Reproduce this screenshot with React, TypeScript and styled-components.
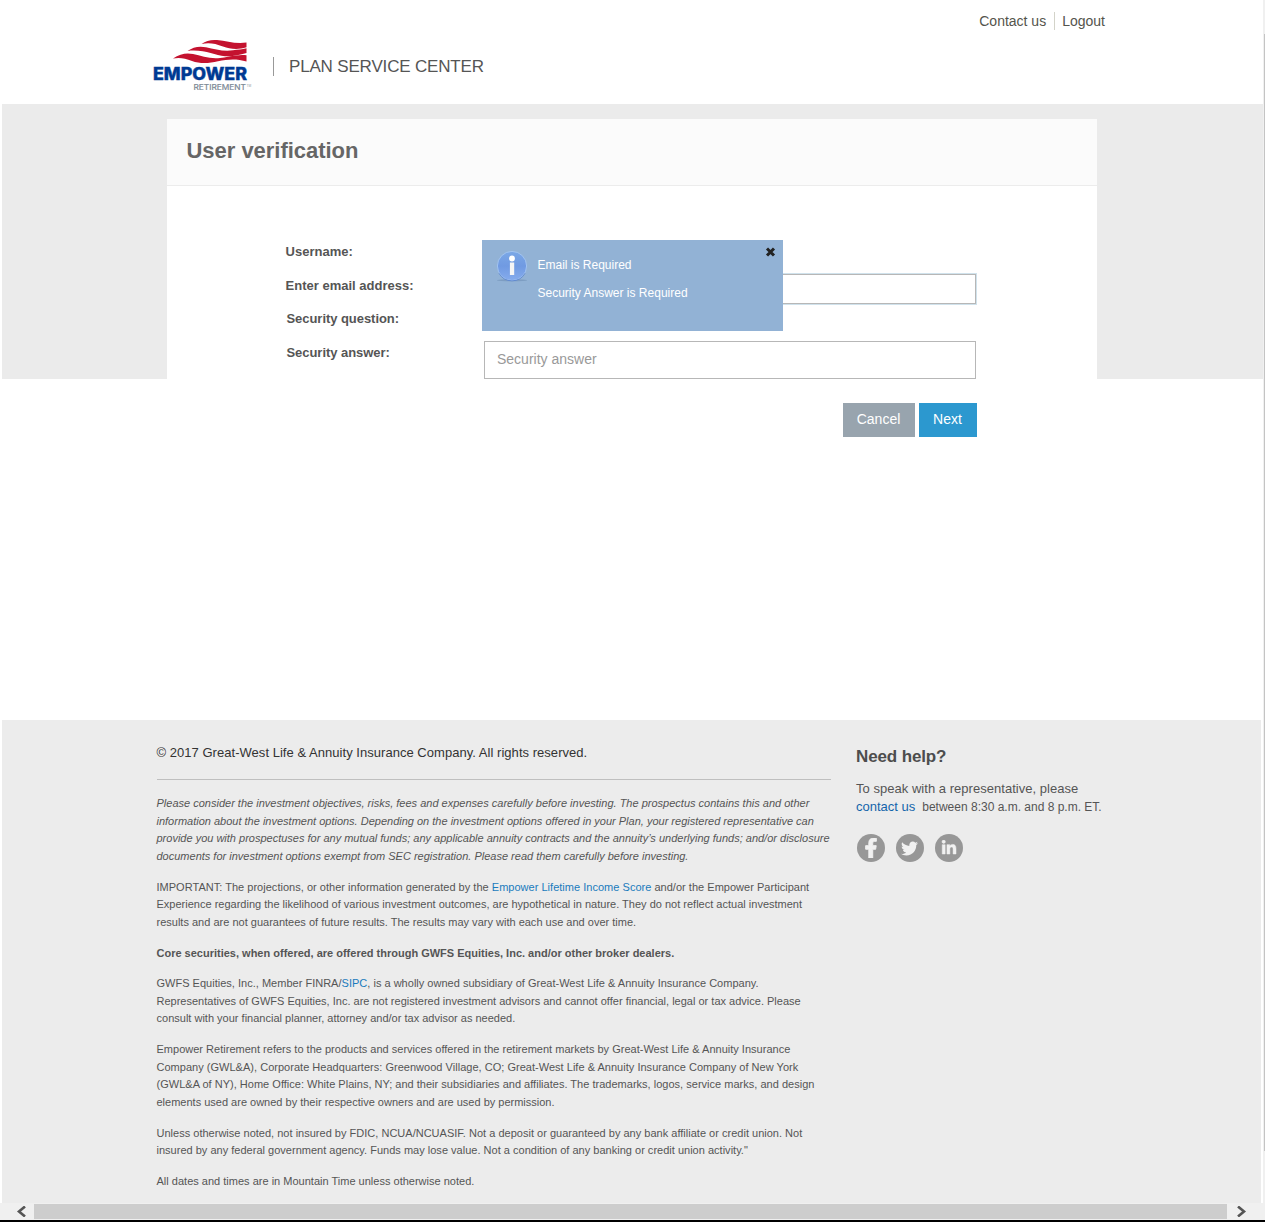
import React from "react";
import styled, { createGlobalStyle } from "styled-components";
import { FaFacebookF, FaTwitter, FaLinkedinIn } from "react-icons/fa";

const GlobalStyle = createGlobalStyle`
  *, *::before, *::after { box-sizing: border-box; }
  body {
    margin: 0;
    background: #fff;
    color: #555;
    font-family: "Liberation Sans", Arial, Helvetica, sans-serif;
    overflow: hidden;
  }
  p, h1, h2 { margin: 0; }
  a { text-decoration: none; color: inherit; }
`;

const Screen = styled.div`
  display: flex;
  flex-direction: column;
  width: 1265px;
  height: 1222px;
  border-bottom: 2px solid #000;
`;

const Viewport = styled.div`
  display: flex;
  height: 1203px;
`;

const Page = styled.div`
  display: flex;
  flex-direction: column;
  width: 1263px;
  padding-left: 2px;
`;

const Header = styled.header`
  height: 104px;
  padding: 12px 158px 0 150px;
`;

const TopLinks = styled.nav`
  display: flex;
  justify-content: flex-end;
  height: 18px;
  font-size: 14px;
  line-height: 18px;
  color: #54544c;
`;

const TopLink = styled.a<{ $divided?: boolean }>`
  white-space: nowrap;
  padding-left: ${(p) => (p.$divided ? 7 : 0)}px;
  margin-left: ${(p) => (p.$divided ? 8 : 0)}px;
  border-left: ${(p) => (p.$divided ? "1px solid #d3d3c9" : "0")};
`;

const Brand = styled.div`
  display: flex;
  align-items: flex-start;
  padding-top: 8px;
`;

const SiteName = styled.div`
  margin: 19px 0 0 21px;
  padding-left: 15px;
  height: 19px;
  border-left: 1px solid #999;
  font-size: 17px;
  line-height: 19px;
  letter-spacing: -0.17px;
  color: #555;
  white-space: nowrap;
`;

const Band = styled.main`
  height: 275px;
  margin-bottom: 341px;
  padding: 15px 166px 0 165px;
  background: #ebebeb;
`;

const Card = styled.section`
  height: 330px;
  background: #fff;
`;

const CardHeader = styled.div`
  height: 67px;
  padding: 18px 0 0 19.5px;
  background: #fbfbfb;
  border-bottom: 1px solid #ececec;
`;

const Title = styled.h1`
  font-size: 22px;
  line-height: 28px;
  letter-spacing: -0.03px;
  color: #666;
`;

const Form = styled.div`
  position: relative;
  display: grid;
  grid-template-columns: 198px 493px;
  grid-template-rows: 34px 33px 34px 38px;
  margin: 54px 0 0 119px;
`;

const Label = styled.label<{ $indent?: number; $spacing?: number }>`
  margin-left: ${(p) => p.$indent ?? 0}px;
  font-size: 13px;
  font-weight: bold;
  line-height: 23px;
  color: #555;
  letter-spacing: ${(p) => p.$spacing ?? 0}px;
`;

const Field = styled.input<{ $height: number; $focused?: boolean }>`
  width: 492px;
  height: ${(p) => p.$height}px;
  padding: 0 12px 2px;
  border: 1px solid #b7b7b7;
  border-radius: 0;
  outline: none;
  box-shadow: ${(p) => (p.$focused ? "0 0 0 1px #d0e2ec" : "none")};
  font: 14px "Liberation Sans", Arial, sans-serif;
  &::placeholder { color: #999; opacity: 1; }
`;

const Notice = styled.div`
  position: absolute;
  left: 196px;
  top: 0;
  width: 301px;
  height: 91px;
  display: flex;
  align-items: flex-start;
  padding: 10px 7px 0 14px;
  background: #92b2d5;
  color: #fff;
`;

const Messages = styled.div`
  flex: 1;
  display: flex;
  flex-direction: column;
  gap: 12px;
  padding: 7px 0 0 9.5px;
  font-size: 12px;
  line-height: 16px;
`;

const CloseIcon = styled.svg`
  margin-top: -3.5px;
`;

const Actions = styled.div`
  display: flex;
  justify-content: flex-end;
  gap: 4px;
  grid-column: 2;
  margin-top: 24px;
`;

const Button = styled.button<{ $width: number; $primary?: boolean }>`
  width: ${(p) => p.$width}px;
  height: 34px;
  padding: 0 1px 2px 0;
  border: 0;
  background: ${(p) => (p.$primary ? "#2c98cf" : "#98a4ae")};
  color: #fff;
  font: 14px "Liberation Sans", Arial, sans-serif;
`;

const Footer = styled.footer`
  display: flex;
  width: 1259px;
  height: 483px;
  padding: 23px 0 0 154.5px;
  background: #ececec;
`;

const Legal = styled.div`
  width: 674.5px;
`;

const Copyright = styled.p`
  height: 37px;
  margin-bottom: 15.2px;
  border-bottom: 1px solid #bfbfbf;
  font-size: 13px;
  line-height: 20px;
  letter-spacing: 0.035px;
  color: #333;
`;

const Paragraph = styled.p<{ $italic?: boolean; $bold?: boolean }>`
  margin-bottom: 13.1px;
  font-size: 11px;
  line-height: 17.6px;
  font-style: ${(p) => (p.$italic ? "italic" : "normal")};
  font-weight: ${(p) => (p.$bold ? "bold" : "normal")};
  color: #555;
`;

const Line = styled.span<{ $spacing?: number; $size?: number }>`
  display: block;
  white-space: nowrap;
  letter-spacing: ${(p) => p.$spacing ?? 0}px;
  ${(p) => (p.$size ? `font-size: ${p.$size}px;` : "")}
`;

const Link = styled.a`
  color: #1a7bbd;
`;

const Help = styled.aside`
  padding: 3px 0 0 25px;
  font-size: 13px;
  line-height: 18px;
`;

const HelpTitle = styled.h2`
  margin-bottom: 13px;
  font-size: 17px;
  line-height: 21px;
  letter-spacing: -0.13px;
  color: #4d4d4d;
`;

const HelpLink = styled.a`
  margin-right: 7px;
  font-size: 13px;
  color: #1465ab;
`;

const Social = styled.div`
  display: flex;
  gap: 11px;
  margin: 18px 0 0 0.5px;
`;

const SocialLink = styled.a`
  display: flex;
  align-items: center;
  justify-content: center;
  width: 28px;
  height: 28px;
  border-radius: 50%;
  background: #979797;
  color: #f1f1f1;
`;

const VerticalScroll = styled.div`
  width: 2px;
  padding: 34px 0 52px 1px;
  background: #f0f0f0;
`;

const VerticalThumb = styled.div`
  height: 100%;
  background: #c4c4c4;
`;

const HorizontalScroll = styled.div`
  display: flex;
  height: 17px;
  padding-top: 1px;
  background: #f0f0f0;
`;

const HorizontalThumb = styled.div`
  width: 1193px;
  height: 15px;
  background: #cdcdcd;
`;

const ScrollArrow = styled.div<{ $width: number; $pad: number }>`
  width: ${(p) => p.$width}px;
  padding: 2px 0 0 ${(p) => p.$pad}px;
  line-height: 0;
`;

const Logo = () => (
  <svg width="100" height="54" viewBox="0 0 100 54">
    <g fill="#c4122f">
      <path d="M49.500 6C54 2.500 59 1.600 65 2C75 2.800 83 6.300 94.500 4.600V9.200C86 12 78 11 71 8.500C63 5.500 57 4.300 49.500 6Z" />
      <path d="M35.500 13C41 9 47 7.800 54 9.200C63 11.200 72 13.700 81 12.200C86 11.600 90 11.500 94.500 10.300V15C87 17.200 81 18.600 73 18.200C62 17.500 52 11 35.500 13Z" />
      <path d="M21 20.500C28 16 34 14.500 41 16C49 17.800 57 20.800 66 20.200C76 19.200 85 16 94.500 17.200V23.500C85 20.500 76 21 66 23.300C57 25.500 48 26 40 23C33 20.500 28 19 21 20.500Z" />
    </g>
    <text x="1" y="41.700" textLength="94" lengthAdjust="spacingAndGlyphs" fill="#003a93" stroke="#003a93" strokeWidth=".4" fontFamily="Inter, sans-serif" fontWeight="800" fontSize="17">EMPOWER</text>
    <text x="41.500" y="52" textLength="52.500" lengthAdjust="spacingAndGlyphs" fill="#7c8995" stroke="#7c8995" strokeWidth=".2" fontFamily="Inter, sans-serif" fontSize="7.600">RETIREMENT</text>
    <text x="94.500" y="48.500" fill="#8b96a0" fontFamily="Inter, sans-serif" fontSize="3">TM</text>
  </svg>
);

const InfoIcon = () => (
  <svg width="32" height="32" viewBox="0 0 32 32">
    <defs>
      <linearGradient id="info" x1="0" y1="0" x2="0" y2="1">
        <stop offset="0" stopColor="#7ba8e6" />
        <stop offset=".5" stopColor="#709ae2" />
        <stop offset="1" stopColor="#86aced" />
      </linearGradient>
    </defs>
    <ellipse cx="16" cy="30.300" rx="15" ry="1" fill="#7d9dc2" />
    <circle cx="16" cy="16" r="14.600" fill="url(#info)" stroke="#a9caf5" strokeWidth=".8" />
    <path d="M3 23.300A15 15 0 0 0 29 23.300" fill="none" stroke="#5580cc" strokeWidth=".8" />
    <circle cx="16" cy="8.500" r="2.900" fill="#fff" />
    <path d="M13.900 12.500H18.200V25H13.900Z" fill="#f5f5f5" />
  </svg>
);

export default function App() {
  return (
    <>
      <GlobalStyle />
      <Screen>
        <Viewport>
          <Page>
            <Header>
              <TopLinks>
                <TopLink href="#">Contact us</TopLink>
                <TopLink href="#" $divided>Logout</TopLink>
              </TopLinks>
              <Brand>
                <Logo />
                <SiteName>PLAN SERVICE CENTER</SiteName>
              </Brand>
            </Header>
            <Band>
              <Card>
                <CardHeader><Title>User verification</Title></CardHeader>
                <Form>
                  <Label $indent={-0.4}>Username:</Label>
                  <span />
                  <Label $indent={-0.4}>Enter email address:</Label>
                  <Field $height={30} $focused />
                  <Label $indent={0.5} $spacing={-0.05}>Security question:</Label>
                  <span />
                  <Label $indent={0.5} $spacing={-0.05}>Security answer:</Label>
                  <Field $height={38} placeholder="Security answer" />
                  <Actions>
                    <Button $width={72}>Cancel</Button>
                    <Button $width={58} $primary>Next</Button>
                  </Actions>
                  <Notice>
                    <InfoIcon />
                    <Messages>
                      <p>Email is Required</p>
                      <p>Security Answer is Required</p>
                    </Messages>
                    <CloseIcon width="11" height="10" viewBox="0 0 11 10">
                      <path d="M2 1.500L9 8.500M9 1.500L2 8.500" stroke="#222" strokeWidth="3" />
                    </CloseIcon>
                  </Notice>
                </Form>
              </Card>
            </Band>
            <Footer>
              <Legal>
                <Copyright>© 2017 Great-West Life &amp; Annuity Insurance Company. All rights reserved.</Copyright>
                <Paragraph $italic>
                  <Line $spacing={0.003}>Please consider the investment objectives, risks, fees and expenses carefully before investing. The prospectus contains this and other</Line>
                  <Line>information about the investment options. Depending on the investment options offered in your Plan, your registered representative can</Line>
                  <Line>provide you with prospectuses for any mutual funds; any applicable annuity contracts and the annuity’s underlying funds; and/or disclosure</Line>
                  <Line>documents for investment options exempt from SEC registration. Please read them carefully before investing.</Line>
                </Paragraph>
                <Paragraph>
                  <Line $spacing={0.022}>IMPORTANT: The projections, or other information generated by the <Link href="#">Empower Lifetime Income Score</Link> and/or the Empower Participant</Line>
                  <Line $spacing={0.005}>Experience regarding the likelihood of various investment outcomes, are hypothetical in nature. They do not reflect actual investment</Line>
                  <Line $spacing={0.005}>results and are not guarantees of future results. The results may vary with each use and over time.</Line>
                </Paragraph>
                <Paragraph $bold>
                  <Line>Core securities, when offered, are offered through GWFS Equities, Inc. and/or other broker dealers.</Line>
                </Paragraph>
                <Paragraph>
                  <Line $spacing={0.013}>GWFS Equities, Inc., Member FINRA/<Link href="#">SIPC</Link>, is a wholly owned subsidiary of Great-West Life &amp; Annuity Insurance Company.</Line>
                  <Line $spacing={0.004}>Representatives of GWFS Equities, Inc. are not registered investment advisors and cannot offer financial, legal or tax advice. Please</Line>
                  <Line $spacing={0.006}>consult with your financial planner, attorney and/or tax advisor as needed.</Line>
                </Paragraph>
                <Paragraph>
                  <Line $spacing={0.011}>Empower Retirement refers to the products and services offered in the retirement markets by Great-West Life &amp; Annuity Insurance</Line>
                  <Line $spacing={0.022}>Company (GWL&amp;A), Corporate Headquarters: Greenwood Village, CO; Great-West Life &amp; Annuity Insurance Company of New York</Line>
                  <Line $spacing={0.015}>(GWL&amp;A of NY), Home Office: White Plains, NY; and their subsidiaries and affiliates. The trademarks, logos, service marks, and design</Line>
                  <Line>elements used are owned by their respective owners and are used by permission.</Line>
                </Paragraph>
                <Paragraph>
                  <Line $spacing={0.012}>Unless otherwise noted, not insured by FDIC, NCUA/NCUASIF. Not a deposit or guaranteed by any bank affiliate or credit union. Not</Line>
                  <Line $spacing={0.012}>insured by any federal government agency. Funds may lose value. Not a condition of any banking or credit union activity."</Line>
                </Paragraph>
                <Paragraph><Line $spacing={0.008}>All dates and times are in Mountain Time unless otherwise noted.</Line></Paragraph>
              </Legal>
              <Help>
                <HelpTitle>Need help?</HelpTitle>
                <Line as="p" $spacing={0.03}>To speak with a representative, please</Line>
                <Line as="p" $size={12}><HelpLink href="#">contact us</HelpLink>between 8:30 a.m. and 8 p.m. ET.</Line>
                <Social>
                  <SocialLink href="#"><FaFacebookF size={20} strokeWidth={24} stroke="#f1f1f1" /></SocialLink>
                  <SocialLink href="#"><FaTwitter size={17} /></SocialLink>
                  <SocialLink href="#"><FaLinkedinIn size={16} strokeWidth={16} stroke="#f1f1f1" /></SocialLink>
                </Social>
              </Help>
            </Footer>
          </Page>
          <VerticalScroll><VerticalThumb /></VerticalScroll>
        </Viewport>
        <HorizontalScroll>
          <ScrollArrow $width={34} $pad={16}>
            <svg width="11" height="11" viewBox="0 0 11 11"><path d="M9 .5L3 5.500L9 10.500" fill="none" stroke="#555" strokeWidth="2.600" /></svg>
          </ScrollArrow>
          <HorizontalThumb />
          <ScrollArrow $width={38} $pad={9}>
            <svg width="11" height="11" viewBox="0 0 11 11"><path d="M2 .5L8 5.500L2 10.500" fill="none" stroke="#555" strokeWidth="2.600" /></svg>
          </ScrollArrow>
        </HorizontalScroll>
      </Screen>
    </>
  );
}
